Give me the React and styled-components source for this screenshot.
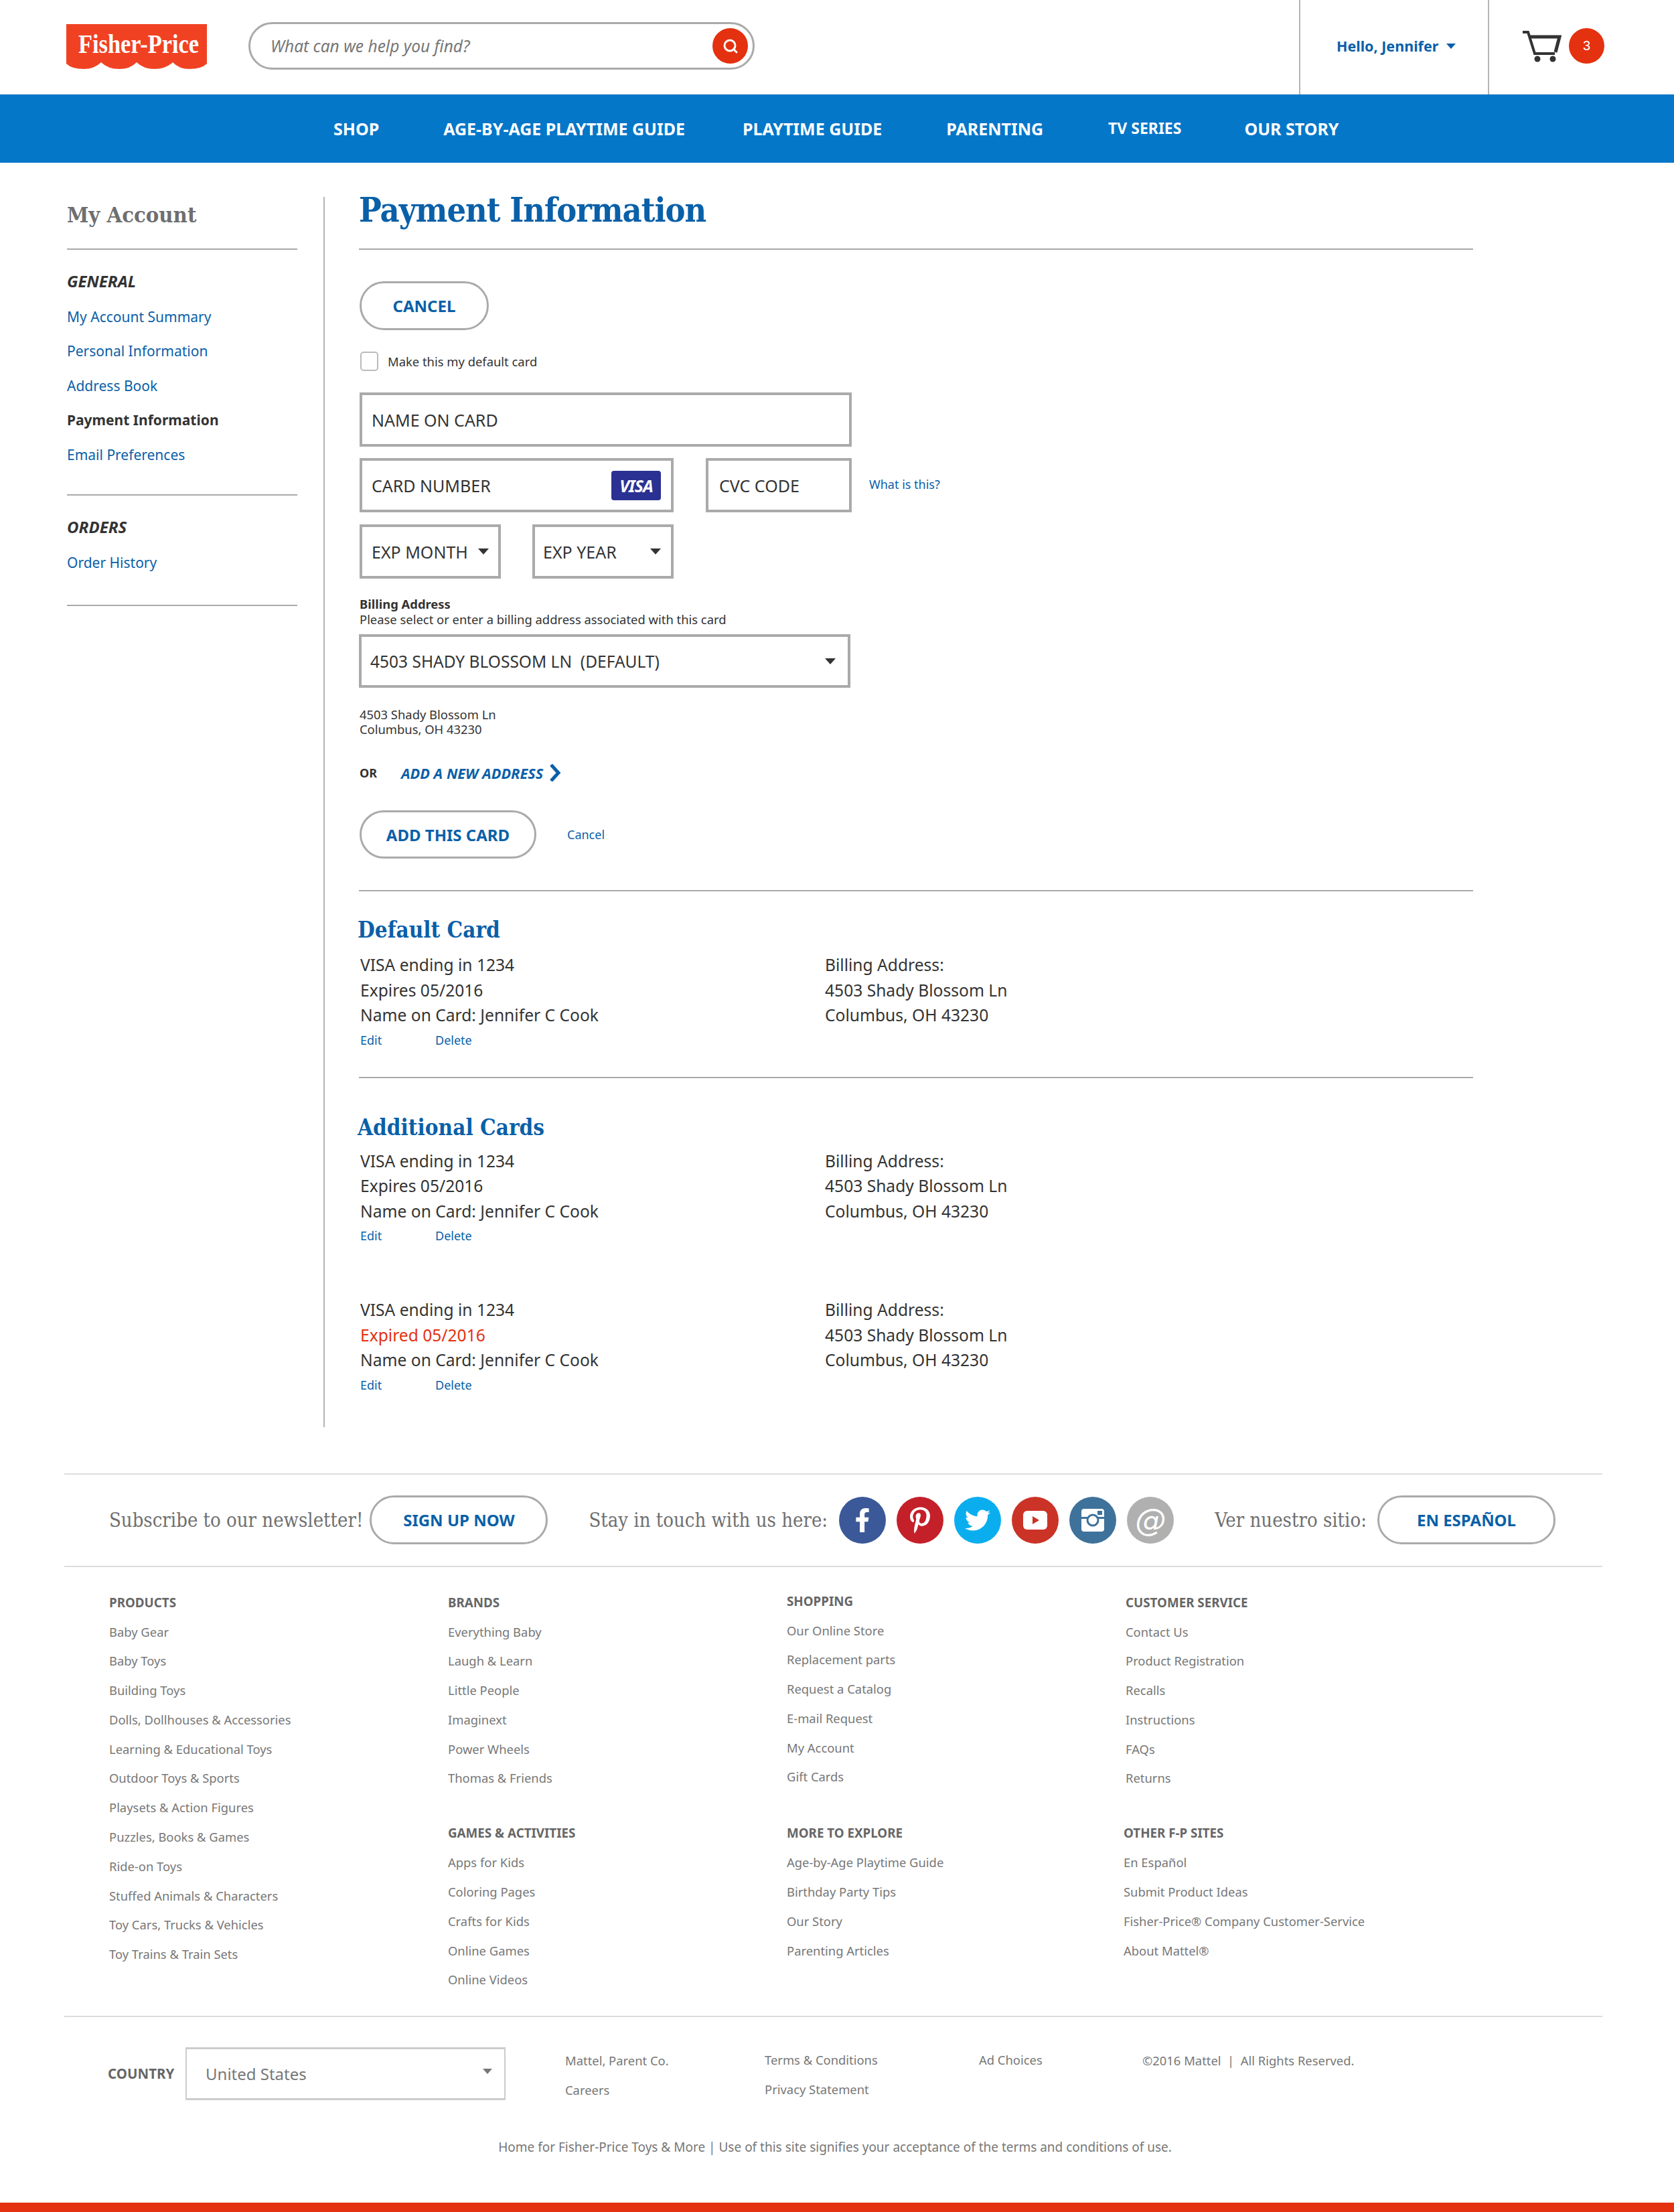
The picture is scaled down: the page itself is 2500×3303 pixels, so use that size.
import React from 'react';
import styled, { createGlobalStyle } from 'styled-components';
import { Search } from 'lucide-react';
import { FaFacebookF, FaPinterestP, FaTwitter } from 'react-icons/fa';

const BLUE = '#0a60a8';
const GREY = '#aaaaaa';
const SLAB = '"DejaVu Serif Condensed", "DejaVu Serif", serif';

const GlobalStyle = createGlobalStyle`
  body {
    margin: 0;
    background: #fff;
    font-family: "Noto Sans", "Open Sans", sans-serif;
    color: #333;
  }
`;

const Page = styled.div`
  width: 2500px;
`;

const Header = styled.header`
  height: 141px;
  display: flex;
  align-items: stretch;
`;

const LogoWrap = styled.div`
  margin-left: 99px;
  padding-top: 36px;
  width: 210px;
`;

const SearchBox = styled.div`
  margin: 33px 0 0 62px;
  width: 756px;
  height: 71px;
  box-sizing: border-box;
  border: 3px solid ${GREY};
  border-radius: 36px;
  display: flex;
  align-items: center;
  justify-content: space-between;
  padding: 0 7px 0 30px;
`;

const SearchHint = styled.span`
  font-style: italic;
  font-size: 24.5px;
  color: #777;
`;

const SearchButton = styled.div`
  width: 53px;
  height: 53px;
  border-radius: 50%;
  background: #e4310f;
  color: #fff;
  display: flex;
  align-items: center;
  justify-content: center;
`;

const AccountCell = styled.div`
  margin-left: auto;
  width: 284px;
  box-sizing: border-box;
  border-left: 2px solid #b5b5b5;
  border-right: 2px solid #b5b5b5;
  display: flex;
  align-items: center;
  padding: 0 0 4px 54px;
  gap: 12px;
  font-size: 21.5px;
  font-weight: 700;
  color: ${BLUE};
`;

const CartCell = styled.div`
  width: 276px;
  box-sizing: border-box;
  display: flex;
  align-items: center;
  padding: 0 0 4px 50px;
  gap: 11px;
`;

const Badge = styled.div`
  width: 53px;
  height: 53px;
  border-radius: 50%;
  background: #e4310f;
  color: #fff;
  font-family: "Liberation Sans", sans-serif;
  font-size: 20px;
  display: flex;
  align-items: center;
  justify-content: center;
`;

const Caret = styled.span`
  display: inline-block;
  width: 0;
  height: 0;
  margin-top: ${(p) => p.$raise || 0}px;
  border-left: ${(p) => p.$size || 8}px solid transparent;
  border-right: ${(p) => p.$size || 8}px solid transparent;
  border-top: ${(p) => (p.$size || 8) + 1}px solid ${(p) => p.$color || '#333'};
`;

const NavBar = styled.nav`
  height: 102px;
  background: #0477c9;
  display: flex;
  align-items: center;
  padding: 0 0 0 498px;
`;

const NavItem = styled.a`
  margin-left: ${(p) => p.$gap}px;
  margin-top: ${(p) => (p.$small ? -2 : 0)}px;
  color: #fff;
  font-size: ${(p) => (p.$small ? 23 : 25)}px;
  font-weight: 700;
  white-space: nowrap;
`;

const Content = styled.div`
  display: flex;
  align-items: flex-start;
  margin-top: 51px;
`;

const Sidebar = styled.aside`
  margin-left: 100px;
  width: 344px;
  flex: none;
`;

const SideTitle = styled.h2`
  margin: 0;
  font-family: ${SLAB};
  font-weight: 700;
  font-size: 32.5px;
  line-height: 54px;
  color: #6f6f6f;
  padding-bottom: 23px;
  border-bottom: 2px solid ${GREY};
`;

const SideHeading = styled.h3`
  margin: 34px 0 0;
  font-size: 24px;
  line-height: 26px;
  font-style: italic;
  font-weight: 700;
  color: #333;
`;

const SideLinks = styled.div`
  margin-top: 15px;
  padding-bottom: ${(p) => p.$pad}px;
  border-bottom: 2px solid ${GREY};
`;

const SideLink = styled.a`
  display: block;
  font-size: 21px;
  line-height: 51.4px;
  color: ${(p) => (p.$active ? '#333' : BLUE)};
  font-weight: ${(p) => (p.$active ? 700 : 400)};
`;

const Main = styled.main`
  margin-left: 39px;
  width: 1717px;
  box-sizing: border-box;
  padding: 0 0 51px 52px;
  border-left: 2px solid #b5b5b5;
`;

const PageTitle = styled.h1`
  margin: 0 0 0 -1px;
  font-family: ${SLAB};
  font-size: 50px;
  letter-spacing: -1px;
  line-height: 40px;
  font-weight: 700;
  color: ${BLUE};
  padding-bottom: 37px;
  border-bottom: 2px solid ${GREY};
`;

const PillButton = styled.button`
  display: block;
  margin-top: ${(p) => p.$top || 0}px;
  width: ${(p) => p.$width}px;
  height: ${(p) => p.$height || 73}px;
  flex: none;
  box-sizing: border-box;
  padding: 0;
  background: #fff;
  border: 3px solid ${GREY};
  border-radius: 37px;
  color: ${BLUE};
  font-family: inherit;
  font-size: 24px;
  font-weight: 700;
`;

const CheckRow = styled.label`
  margin-top: 32px;
  height: 29px;
  display: flex;
  align-items: center;
  gap: 14px;
  font-size: 18.4px;
  color: #333;
`;

const CheckBox = styled.span`
  width: 27px;
  height: 29px;
  margin-left: 1px;
  box-sizing: border-box;
  border: 2px solid #bbb;
  border-radius: 5px;
`;

const Field = styled.div`
  width: ${(p) => p.$width}px;
  height: ${(p) => p.$height || 81}px;
  flex: none;
  box-sizing: border-box;
  border: 4px solid ${GREY};
  display: flex;
  align-items: center;
  justify-content: space-between;
  padding: 0 ${(p) => p.$right || 14}px 0 ${(p) => p.$left || 14}px;
  font-size: 25px;
  color: #333;
  white-space: pre;
`;

const NameField = styled(Field)`
  margin-top: 32px;
`;

const FieldRow = styled.div`
  margin-top: ${(p) => p.$top}px;
  display: flex;
  align-items: center;
  gap: ${(p) => p.$gap}px;
`;

const VisaBadge = styled.span`
  width: 74px;
  height: 44px;
  border-radius: 4px;
  background: #2b3192;
  color: #fff;
  font-size: 25px;
  font-weight: 700;
  font-style: italic;
  letter-spacing: -1px;
  display: flex;
  align-items: center;
  justify-content: center;
`;

const SmallLink = styled.a`
  font-size: 18px;
  color: ${BLUE};
`;

const WhatLink = styled(SmallLink)`
  margin: -4px 0 0 -22px;
`;

const BillingText = styled.div`
  margin-top: 26px;
  font-size: 18.4px;
  line-height: 23px;
  color: #333;
`;

const BillingLabel = styled.div`
  font-weight: 700;
`;

const SelectField = styled(Field)`
  margin: 11px 0 0 -1px;
  font-size: 24.5px;
`;

const AddressBlock = styled.div`
  margin-top: 29px;
  font-size: 18.4px;
  line-height: 22px;
  color: #333;
`;

const OrRow = styled.div`
  margin-top: 41px;
  height: 26px;
  display: flex;
  align-items: center;
`;

const OrLabel = styled.span`
  width: 62px;
  font-size: 18px;
  font-weight: 700;
  color: #333;
`;

const AddLink = styled.a`
  font-size: 21.7px;
  font-weight: 700;
  font-style: italic;
  color: ${BLUE};
  margin-right: 9px;
`;

const ActionRow = styled.div`
  margin-top: 43px;
  display: flex;
  align-items: center;
  gap: 46px;
`;

const Divider = styled.hr`
  margin: ${(p) => p.$top}px 0 0 -1px;
  height: 2px;
  border: 0;
  background: ${GREY};
`;

const SectionTitle = styled.h2`
  margin: ${(p) => p.$top}px 0 0 -3px;
  font-family: ${SLAB};
  font-size: 33px;
  line-height: 44px;
  font-weight: 700;
  color: ${BLUE};
`;

const CardRow = styled.div`
  margin-top: ${(p) => p.$top}px;
  display: flex;
  padding-left: 1px;
  font-size: 24.6px;
  line-height: 37.5px;
  color: #333;
`;

const CardColumn = styled.div`
  width: 694px;
`;

const Expired = styled.div`
  color: #e4310f;
`;

const CardActions = styled.div`
  margin-top: 6px;
  padding-left: 1px;
  display: flex;
  line-height: 24px;
`;

const EditLink = styled(SmallLink)`
  width: 112px;
`;

const Footer = styled.footer`
  margin: 69px 0 0 96px;
  width: 2297px;
`;

const SocialRow = styled.div`
  height: 136px;
  border-top: 2px solid #ddd;
  border-bottom: 2px solid #ddd;
  display: flex;
  align-items: center;
  padding-left: 67px;
`;

const SocialText = styled.span`
  margin-left: ${(p) => p.$left || 0}px;
  margin-right: ${(p) => p.$right}px;
  font-family: ${SLAB};
  font-size: 29px;
  color: #6f6f6f;
  white-space: nowrap;
`;

const SocialIcons = styled.div`
  display: flex;
  gap: 16px;
`;

const SocialIcon = styled.a`
  width: 70px;
  height: 70px;
  border-radius: 50%;
  background: ${(p) => p.$bg};
  color: #fff;
  display: flex;
  align-items: center;
  justify-content: center;
  font-size: 46px;
  font-style: italic;
  font-family: "DejaVu Sans", sans-serif;
`;

const LinkGrid = styled.div`
  display: grid;
  grid-template-columns: repeat(4, 506px);
  padding: 41px 0 0 67px;
`;

const LinkGroup = styled.div`
  margin-top: ${(p) => p.$top || 0}px;
  margin-left: ${(p) => p.$left || 0}px;
`;

const GroupHeading = styled.h4`
  margin: 0 0 10px;
  font-size: 18.8px;
  line-height: 24px;
  font-weight: 700;
  color: #666;
`;

const FooterLink = styled.a`
  display: block;
  font-size: 18.4px;
  line-height: 43.8px;
  color: #777;
  white-space: pre;
`;

const BottomRow = styled.div`
  margin-top: 32px;
  border-top: 2px solid #ddd;
  padding: 45px 0 0 65px;
  display: flex;
  align-items: flex-start;
`;

const CountryLabel = styled.span`
  width: 116px;
  flex: none;
  line-height: 79px;
  font-size: 20.5px;
  font-weight: 700;
  color: #666;
`;

const CountrySelect = styled.div`
  width: 478px;
  height: 79px;
  flex: none;
  box-sizing: border-box;
  border: 2px solid #ccc;
  border-top-width: 3px;
  border-bottom-width: 3px;
  display: flex;
  align-items: center;
  justify-content: space-between;
  padding: 0 18px 0 28px;
  font-size: 24px;
  color: #777;
`;

const LegalColumn = styled.div`
  width: ${(p) => p.$width}px;
  margin-left: ${(p) => p.$left || 0}px;
  margin-top: ${(p) => p.$top}px;
  flex: none;
`;

const LegalNote = styled.div`
  margin-top: 51px;
  padding-left: 5px;
  text-align: center;
  font-size: 19px;
  line-height: 24px;
  color: #777;
`;

const RedBar = styled.div`
  margin-top: 71px;
  height: 15px;
  background: #e4310f;
`;

const nav = [
  { label: 'SHOP', gap: 0 },
  { label: 'AGE-BY-AGE PLAYTIME GUIDE', gap: 96 },
  { label: 'PLAYTIME GUIDE', gap: 86 },
  { label: 'PARENTING', gap: 96 },
  { label: 'TV SERIES', gap: 97, small: true },
  { label: 'OUR STORY', gap: 94 },
];

const sideGeneral = ['My Account Summary', 'Personal Information', 'Address Book', 'Payment Information', 'Email Preferences'];

const footerColumns = [
  [{ title: 'PRODUCTS', links: ['Baby Gear', 'Baby Toys', 'Building Toys', 'Dolls, Dollhouses & Accessories', 'Learning & Educational Toys', 'Outdoor Toys & Sports', 'Playsets & Action Figures', 'Puzzles, Books & Games', 'Ride-on Toys', 'Stuffed Animals & Characters', 'Toy Cars, Trucks & Vehicles', 'Toy Trains & Train Sets'] }],
  [
    { title: 'BRANDS', links: ['Everything Baby', 'Laugh & Learn', 'Little People', 'Imaginext', 'Power Wheels', 'Thomas & Friends'] },
    { title: 'GAMES & ACTIVITIES', top: 48, links: ['Apps for Kids', 'Coloring Pages', 'Crafts for Kids', 'Online Games', 'Online Videos'] },
  ],
  [
    { title: 'SHOPPING', top: -2, links: ['Our Online Store', 'Replacement parts', 'Request a Catalog', 'E-mail Request', 'My Account', 'Gift Cards'] },
    { title: 'MORE TO EXPLORE', top: 50, links: ['Age-by-Age Playtime Guide', 'Birthday Party Tips', 'Our Story', 'Parenting Articles'] },
  ],
  [
    { title: 'CUSTOMER SERVICE', links: ['Contact Us', 'Product Registration', 'Recalls', 'Instructions', 'FAQs', 'Returns'] },
    { title: 'OTHER F-P SITES', top: 48, left: -3, links: ['En Español', 'Submit Product Ideas', 'Fisher-Price® Company Customer-Service', 'About Mattel®'] },
  ],
];

function Logo() {
  return (
    <svg width="210" height="67" viewBox="0 0 210 67">
      <path
        d="M0 0H210V59Q202 67 184 67Q168 67 159 57Q149 67 132 67Q115 67 105 57Q96 67 79 67Q62 67 52 57Q42 67 26 67Q8 67 0 59Z"
        fill="#f04223"
      />
      <text transform="translate(18 43) scale(0.86 1)" fill="#fff" fontFamily="Liberation Serif, serif" fontWeight="700" fontSize="40">
        Fisher-Price
      </text>
      <circle cx="193" cy="26" r="2" fill="none" stroke="#fff" />
    </svg>
  );
}

function CartIcon() {
  return (
    <svg width="58" height="48" viewBox="0 0 58 48" fill="none" stroke="#333" strokeWidth="4">
      <path d="M0 3H8L18 35H48" />
      <path d="M11 10H55L49 33" strokeWidth="5" />
      <circle cx="22" cy="43" r="4.500" fill="#333" stroke="none" />
      <circle cx="45" cy="43" r="4.500" fill="#333" stroke="none" />
    </svg>
  );
}

function YoutubeGlyph() {
  return (
    <svg width="36" height="28" viewBox="0 0 36 28">
      <rect width="36" height="28" rx="6" fill="#fff" />
      <path d="M14 8L24 14L14 20Z" fill="#cb3327" />
    </svg>
  );
}

function InstagramGlyph() {
  return (
    <svg width="34" height="34" viewBox="0 0 34 34">
      <rect width="34" height="34" rx="4" fill="#fff" />
      <rect x="0" y="12" width="34" height="3" fill="#3e729b" />
      <circle cx="17" cy="17" r="8" fill="#fff" stroke="#3e729b" strokeWidth="3" />
      <rect x="24" y="3" width="7" height="6" fill="#3e729b" />
    </svg>
  );
}

function CardDetails({ top, expired }) {
  return (
    <>
      <CardRow $top={top}>
        <CardColumn>
          <div>VISA ending in 1234</div>
          {expired ? <Expired>Expired 05/2016</Expired> : <div>Expires 05/2016</div>}
          <div>Name on Card: Jennifer C Cook</div>
        </CardColumn>
        <CardColumn>
          <div>Billing Address:</div>
          <div>4503 Shady Blossom Ln</div>
          <div>Columbus, OH 43230</div>
        </CardColumn>
      </CardRow>
      <CardActions>
        <EditLink>Edit</EditLink>
        <SmallLink>Delete</SmallLink>
      </CardActions>
    </>
  );
}

export default function App() {
  return (
    <Page>
      <GlobalStyle />
      <Header>
        <LogoWrap><Logo /></LogoWrap>
        <SearchBox>
          <SearchHint>What can we help you find?</SearchHint>
          <SearchButton><Search size={24} strokeWidth={3} /></SearchButton>
        </SearchBox>
        <AccountCell>
          Hello, Jennifer
          <Caret $size={7} $color={BLUE} />
        </AccountCell>
        <CartCell>
          <CartIcon />
          <Badge>3</Badge>
        </CartCell>
      </Header>

      <NavBar>
        {nav.map((item) => (
          <NavItem key={item.label} $gap={item.gap} $small={item.small}>{item.label}</NavItem>
        ))}
      </NavBar>

      <Content>
        <Sidebar>
          <SideTitle>My Account</SideTitle>
          <SideHeading>GENERAL</SideHeading>
          <SideLinks $pad={33}>
            {sideGeneral.map((label) => (
              <SideLink key={label} $active={label === 'Payment Information'}>{label}</SideLink>
            ))}
          </SideLinks>
          <SideHeading>ORDERS</SideHeading>
          <SideLinks $pad={37}>
            <SideLink>Order History</SideLink>
          </SideLinks>
        </Sidebar>

        <Main>
          <PageTitle>Payment Information</PageTitle>
          <PillButton $top={47} $width={193}>CANCEL</PillButton>
          <CheckRow>
            <CheckBox />
            Make this my default card
          </CheckRow>
          <NameField $width={735}>NAME ON CARD</NameField>
          <FieldRow $top={17} $gap={48}>
            <Field $width={469} $right={15}>
              CARD NUMBER
              <VisaBadge>VISA</VisaBadge>
            </Field>
            <Field $width={218} $left={16}>CVC CODE</Field>
            <WhatLink>What is this?</WhatLink>
          </FieldRow>
          <FieldRow $top={18} $gap={47}>
            <Field $width={211}>
              EXP MONTH
              <Caret />
            </Field>
            <Field $width={211} $left={12} $right={15}>
              EXP YEAR
              <Caret />
            </Field>
          </FieldRow>
          <BillingText>
            <BillingLabel>Billing Address</BillingLabel>
            Please select or enter a billing address associated with this card
          </BillingText>
          <SelectField $width={734} $height={80} $left={13} $right={18}>
            4503 SHADY BLOSSOM LN  (DEFAULT)
            <Caret />
          </SelectField>
          <AddressBlock>
            4503 Shady Blossom Ln
            <br />
            Columbus, OH 43230
          </AddressBlock>
          <OrRow>
            <OrLabel>OR</OrLabel>
            <AddLink>ADD A NEW ADDRESS</AddLink>
            <svg width="18" height="26" viewBox="0 0 18 26" fill="none" stroke={BLUE} strokeWidth="5">
              <path d="M3 1L14 13L3 25" />
            </svg>
          </OrRow>
          <ActionRow>
            <PillButton $width={264} $height={72}>ADD THIS CARD</PillButton>
            <SmallLink>Cancel</SmallLink>
          </ActionRow>
          <Divider $top={47} />
          <SectionTitle $top={36}>Default Card</SectionTitle>
          <CardDetails top={11} />
          <Divider $top={43} />
          <SectionTitle $top={52}>Additional Cards</SectionTitle>
          <CardDetails top={9} />
          <CardDetails top={80} expired />
        </Main>
      </Content>

      <Footer>
        <SocialRow>
          <SocialText $right={10}>Subscribe to our newsletter!</SocialText>
          <PillButton $width={266}>SIGN UP NOW</PillButton>
          <SocialText $left={61} $right={17}>Stay in touch with us here:</SocialText>
          <SocialIcons>
            <SocialIcon $bg="#3b5998"><FaFacebookF size={36} /></SocialIcon>
            <SocialIcon $bg="#c4202a"><FaPinterestP size={40} /></SocialIcon>
            <SocialIcon $bg="#0aaeee"><FaTwitter size={38} /></SocialIcon>
            <SocialIcon $bg="#cb3327"><YoutubeGlyph /></SocialIcon>
            <SocialIcon $bg="#3e729b"><InstagramGlyph /></SocialIcon>
            <SocialIcon $bg="#b0b0b0">@</SocialIcon>
          </SocialIcons>
          <SocialText $left={61} $right={16}>Ver nuestro sitio:</SocialText>
          <PillButton $width={266}>EN ESPAÑOL</PillButton>
        </SocialRow>

        <LinkGrid>
          {footerColumns.map((groups) => (
            <div key={groups[0].title}>
              {groups.map((group) => (
                <LinkGroup key={group.title} $top={group.top} $left={group.left}>
                  <GroupHeading>{group.title}</GroupHeading>
                  {group.links.map((link) => (
                    <FooterLink key={link}>{link}</FooterLink>
                  ))}
                </LinkGroup>
              ))}
            </div>
          ))}
        </LinkGrid>

        <BottomRow>
          <CountryLabel>COUNTRY</CountryLabel>
          <CountrySelect>
            United States
            <Caret $size={7} $color="#777" $raise={-8} />
          </CountrySelect>
          <LegalColumn $width={298} $left={89} $top={-2}>
            <FooterLink>Mattel, Parent Co.</FooterLink>
            <FooterLink>Careers</FooterLink>
          </LegalColumn>
          <LegalColumn $width={320} $top={-3}>
            <FooterLink>Terms & Conditions</FooterLink>
            <FooterLink>Privacy Statement</FooterLink>
          </LegalColumn>
          <LegalColumn $width={244} $top={-3}>
            <FooterLink>Ad Choices</FooterLink>
          </LegalColumn>
          <LegalColumn $width={320} $top={-2}>
            <FooterLink>©2016 Mattel  |  All Rights Reserved.</FooterLink>
          </LegalColumn>
        </BottomRow>

        <LegalNote>Home for Fisher-Price Toys & More | Use of this site signifies your acceptance of the terms and conditions of use.</LegalNote>
      </Footer>

      <RedBar />
    </Page>
  );
}
